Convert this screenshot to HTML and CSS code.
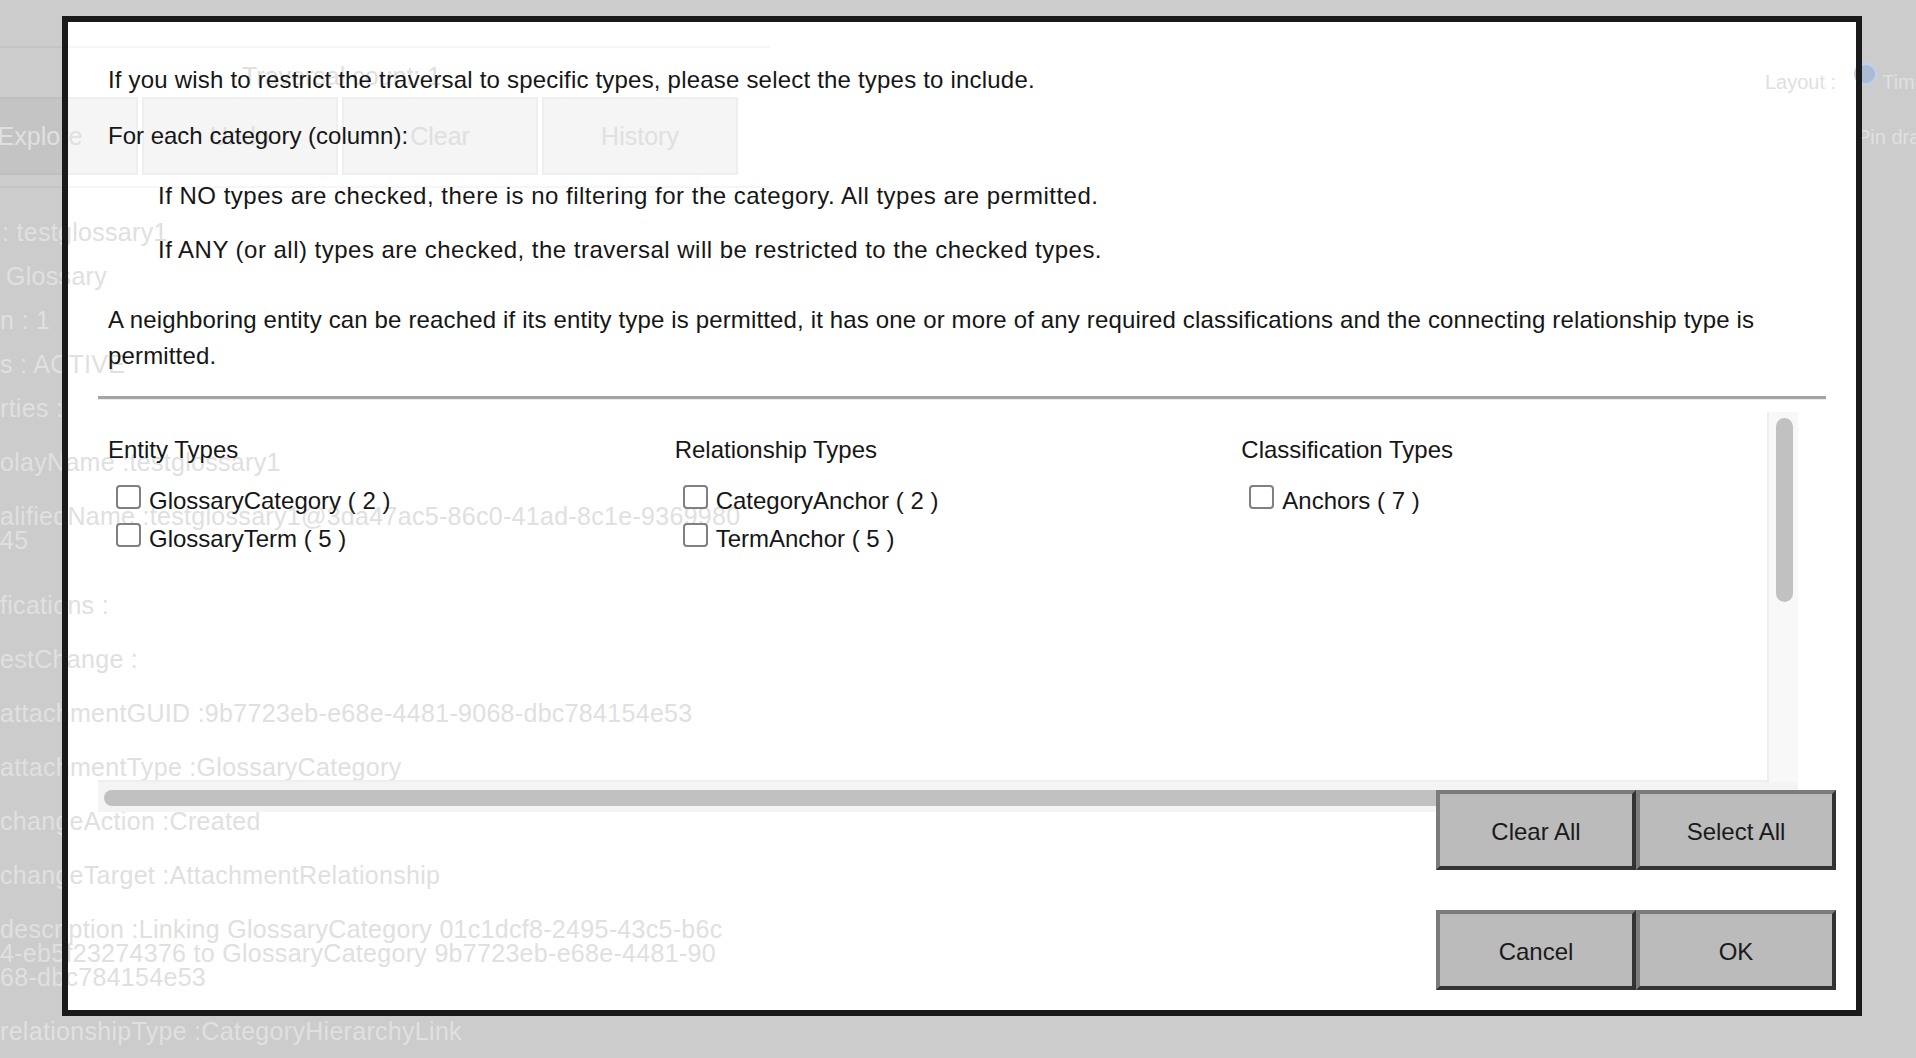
FILE: index.html
```html
<!DOCTYPE html>
<html>
<head>
<meta charset="utf-8">
<title>Traversal filter</title>
<link rel="stylesheet" href="styles.css">
</head>
<body>
<div class="app">
  <div class="app-left">
    <div class="app-top"></div>
    <div class="app-title">Traversal count: 1</div>
    <div class="app-actions">
      <div class="ghost-btn">Explore</div>
      <div class="ghost-btn">Undo</div>
      <div class="ghost-btn">Clear</div>
      <div class="ghost-btn">History</div>
    </div>
    <div class="app-sep"></div>
    <div class="details">
      <div class="d1 ind2">: testglossary1</div>
      <div class="d1 ind6">Glossary</div>
      <div class="d1">n : 1</div>
      <div class="d1">s : ACTIVE</div>
      <div class="d1">rties :</div>
      <div class="d2 first">olayName :testglossary1</div>
      <div class="d2">alifiedName :testglossary1@3da47ac5-86c0-41ad-8c1e-9369980<br>45</div>
      <div class="d2 wide">fications :</div>
      <div class="d2">estChange :</div>
      <div class="d2">attachmentGUID :9b7723eb-e68e-4481-9068-dbc784154e53</div>
      <div class="d2">attachmentType :GlossaryCategory</div>
      <div class="d2">changeAction :Created</div>
      <div class="d2">changeTarget :AttachmentRelationship</div>
      <div class="d2">description :Linking GlossaryCategory 01c1dcf8-2495-43c5-b6c<br>4-eb5f23274376 to GlossaryCategory 9b7723eb-e68e-4481-90<br>68-dbc784154e53</div>
      <div class="d2">relationshipType :CategoryHierarchyLink</div>
    </div>
  </div>
  <div class="app-right">
    <div class="layout-row"><span class="r-text">Layout :</span><span class="radio"></span><span class="r-text">Timeline</span></div>
    <div class="pin-row">Pin drag</div>
  </div>
</div>

<div class="modal">
  <div class="modal-body">
    <p class="intro">If you wish to restrict the traversal to specific types, please select the types to include.</p>
    <p class="intro l2">For each category (column):</p>
    <p class="intro l3 indent">If NO types are checked, there is no filtering for the category. All types are permitted.</p>
    <p class="intro l4 indent">If ANY (or all) types are checked, the traversal will be restricted to the checked types.</p>
    <p class="intro l5">A neighboring entity can be reached if its entity type is permitted, it has one or more of any required classifications and the connecting relationship type is permitted.</p>
    <hr class="rule">
    <div class="scroller">
      <div class="scroll-main">
        <div class="pane">
          <div class="columns">
            <div class="col">
              <h3 class="col-title">Entity Types</h3>
              <label class="opt"><input class="cb" type="checkbox"><span class="opt-text">GlossaryCategory ( 2 )</span></label>
              <label class="opt"><input class="cb" type="checkbox"><span class="opt-text">GlossaryTerm ( 5 )</span></label>
            </div>
            <div class="col">
              <h3 class="col-title">Relationship Types</h3>
              <label class="opt"><input class="cb" type="checkbox"><span class="opt-text">CategoryAnchor ( 2 )</span></label>
              <label class="opt"><input class="cb" type="checkbox"><span class="opt-text">TermAnchor ( 5 )</span></label>
            </div>
            <div class="col">
              <h3 class="col-title">Classification Types</h3>
              <label class="opt"><input class="cb" type="checkbox"><span class="opt-text">Anchors ( 7 )</span></label>
            </div>
          </div>
        </div>
        <div class="vbar"><div class="vthumb"></div></div>
      </div>
      <div class="hbar"><div class="hthumb"></div></div>
    </div>
    <div class="actions">
      <div class="btn-row"><button class="btn">Clear All</button><button class="btn">Select All</button></div>
      <div class="btn-row"><button class="btn">Cancel</button><button class="btn">OK</button></div>
    </div>
  </div>
</div>
</body>
</html>
```
FILE: styles.css
```css
* { box-sizing: border-box; }
html, body { margin: 0; }
body {
  width: 1916px;
  height: 1058px;
  overflow: hidden;
  position: relative;
  background: #cccccc;
  font-family: "Liberation Sans", Arial, sans-serif;
}

/* background application (faint, shows through the dialog) */
.app {
  position: relative;
  z-index: 2;
  display: flex;
  height: 1058px;
  pointer-events: none;
  color: #e0e0e0;
  white-space: nowrap;
}
.app-left { flex: none; width: 828px; margin-left: -58px; }
.app-top { height: 48px; border-bottom: 2px solid rgba(0,0,0,0.035); }
.app-title { height: 49px; padding: 7px 0 0 300px; font-size: 25px; line-height: 42px; }
.app-actions { display: flex; gap: 4px; height: 78px; }
.ghost-btn {
  width: 196px; height: 78px;
  background: rgba(0,0,0,0.04);
  border: 2px solid rgba(0,0,0,0.025);
  display: flex; align-items: center; justify-content: center;
  font-size: 25px;
}
.app-sep { margin-top: 11px; border-top: 2px solid rgba(0,0,0,0.035); }
.details { padding-left: 58px; margin-top: 22px; font-size: 25px; letter-spacing: 0.3px; }
.d1 { line-height: 44px; }
.d2 { line-height: 24px; margin-top: 30px; }
.d2.first { margin-top: 20px; }
.d2.wide { margin-top: 41px; }
.ind2 { padding-left: 2px; }
.ind6 { padding-left: 6px; }

.app-right { flex: none; width: 151px; margin-left: auto; padding-top: 62px; font-size: 20px; }
.layout-row { display: flex; align-items: flex-start; height: 25px; }
.r-text { line-height: 24px; margin-top: 8px; }
.radio {
  flex: none; width: 24px; height: 24px; border-radius: 50%;
  border: 3px solid #c3d0e3; background: #a9bbd5;
  margin: 0 4px 0 18px;
}
.pin-row { margin-top: 38px; padding-left: 92px; line-height: 24px; }

/* dialog */
.modal {
  position: absolute;
  left: 62px; top: 16px;
  width: 1800px; height: 1000px;
  border: 6px solid transparent;
  background: #ffffff;
  background-clip: padding-box;
}
.modal::after {
  content: "";
  position: absolute;
  inset: -6px;
  border: 6px solid #1a1a1a;
  z-index: 3;
  pointer-events: none;
}
.modal-body {
  position: relative;
  z-index: 3;
  display: flex;
  flex-direction: column;
  height: 100%;
  padding: 40px 0 20px;
  color: #161616;
}
.intro { margin: 0; padding: 0 68px 0 40px; font-size: 24px; line-height: 36px; letter-spacing: 0.2px; }
.l2 { margin-top: 20px; letter-spacing: 0; }
.l3 { margin-top: 24px; letter-spacing: 0.5px; }
.l4 { margin-top: 18px; letter-spacing: 0.48px; }
.l5 { margin-top: 34px; letter-spacing: 0.15px; }
.indent { padding-left: 90px; }
.rule {
  margin: 22px 30px 0;
  height: 0;
  border: 0;
  border-top: 3px solid #a4a4a4;
  border-bottom: 1px solid #ececec;
}

.scroller { margin: 12px 0 0 30px; width: 1700px; height: 400px; display: flex; flex-direction: column; flex: none; }
.scroll-main { display: flex; height: 370px; }
.pane {
  width: 1671px; height: 370px; overflow: hidden;
  border-right: 2px solid #eeeeee;
  border-bottom: 2px solid #eeeeee;
}
.columns { width: 1700px; display: grid; grid-template-columns: repeat(3, 1fr); }
.col { padding-left: 10px; }
.col-title { margin: 20px 0 12px; font-size: 24px; font-weight: 400; line-height: 36px; }
.opt { display: flex; align-items: flex-start; height: 38px; line-height: 38px; font-size: 24px; }
.opt-text { padding-top: 2px; }
.cb {
  -webkit-appearance: none; appearance: none;
  flex: none;
  width: 25px; height: 24px;
  margin: 5px 8px 0 8px;
  border: 2px solid #808080;
  border-radius: 4px;
  background: #fff;
}
.vbar { width: 29px; height: 370px; background: #f8f8f8; padding: 6px 5px 0 7px; }
.vthumb { width: 17px; height: 184px; border-radius: 9px; background: #c1c1c1; }
.hbar { height: 30px; background: #f4f4f4; padding: 8px 0 0 6px; }
.hthumb { width: 1560px; height: 16px; border-radius: 8px; background: #c1c1c1; }

.actions {
  position: relative;
  margin-top: -22px;
  display: flex;
  flex-direction: column;
  align-items: flex-end;
  gap: 40px;
  padding-right: 20px;
}
.btn-row { display: flex; }
.btn {
  width: 200px; height: 80px;
  padding: 3px 0 0;
  background: #bbbbbb;
  border: 4px solid;
  border-color: #7b7b7b #333333 #333333 #7b7b7b;
  font: 24px "Liberation Sans", Arial, sans-serif;
  color: #1a1a1a;
}
```
